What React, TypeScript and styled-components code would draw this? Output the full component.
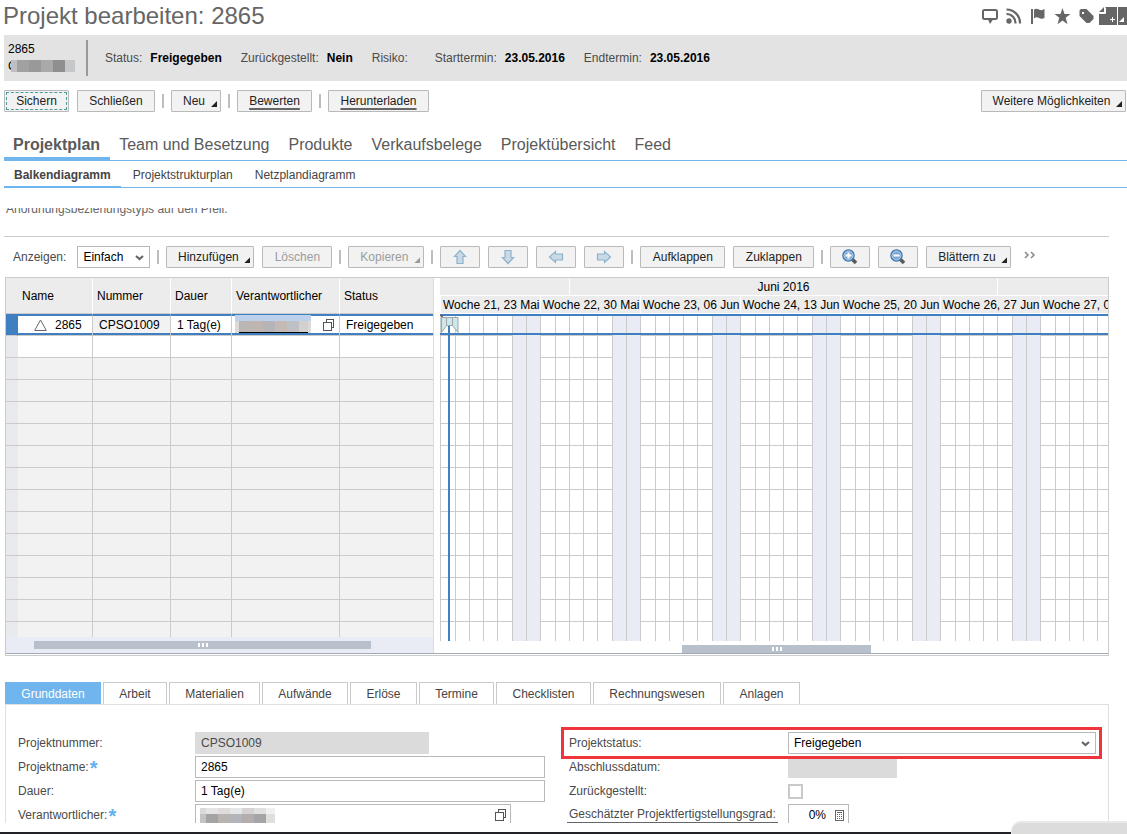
import React from "react";
import styled, { createGlobalStyle, css } from "styled-components";

const blue = "#407fc0";
const sky = "#70b5ee";
const line = "#cbcbcb";

const GlobalStyle = createGlobalStyle`
  * { box-sizing: border-box; }
  body {
    margin: 0;
    background: #fff;
    color: #4a4a4a;
    font-family: "Liberation Sans", Arial, sans-serif;
    font-size: 12px;
    line-height: 16px;
  }
  button, input, select { font: inherit; color: inherit; margin: 0; }
`;

const Page = styled.div`
  display: flex;
  flex-direction: column;
  height: 100vh;
  overflow: hidden;
  position: relative;
`;

const TitleBar = styled.header`
  display: flex;
  flex: none;
  align-items: center;
  justify-content: space-between;
  height: 35px;
  padding: 0 0 3px 3px;
`;

const Title = styled.h1`
  margin: 0;
  font-size: 24px;
  line-height: 28px;
  font-weight: normal;
  color: #666;
`;

const IconBar = styled.div`
  display: flex;
  align-items: center;
`;

const IconButton = styled.button<{ $width?: number }>`
  display: flex;
  justify-content: center;
  width: ${(p) => p.$width ?? 24}px;
  padding: 0;
  border: 0;
  background: none;
  color: #666;
`;

const SummaryBar = styled.section`
  display: flex;
  flex: none;
  align-items: center;
  height: 46px;
  margin-left: 4px;
  padding-left: 4px;
  background: #e3e3e3;
`;

const ProjectId = styled.div`
  width: 80px;
  height: 36px;
  margin-right: 17px;
  border-right: 2px solid #999;
  color: #000;
  line-height: 18px;
`;

const Masked = styled.div`
  display: flex;
  align-items: center;
  height: 16px;
`;

const Mosaic = styled.span<{ $height: number }>`
  display: flex;
  height: ${(p) => p.$height}px;
`;

const HeaderMosaic = styled(Mosaic)`
  margin-left: -6px;
`;

const Tile = styled.span<{ $color: string; $width?: number }>`
  width: ${(p) => p.$width ?? 12}px;
  background: ${(p) => p.$color};
`;

const Fact = styled.div`
  display: flex;
  gap: 8px;
  margin-right: 19px;
  white-space: nowrap;
  b { color: #000; }
`;

const Toolbar = styled.div`
  display: flex;
  flex: none;
  align-items: center;
  padding: 9px 0;
`;

const MainToolbar = styled(Toolbar)`
  padding: 9px 1px 9px 4px;
`;

const ChartToolbar = styled(Toolbar)`
  padding-left: 9px;
`;

const Divider = styled.span`
  flex: none;
  width: 2px;
  height: 14px;
  margin: 0 7px;
  background: #bdbdbd;
`;

const Spacer = styled.span`
  flex: 1;
`;

const Button = styled.button<{ $menu?: boolean; $width?: number; $underline?: boolean; $focused?: boolean }>`
  position: relative;
  display: flex;
  flex: none;
  align-items: center;
  justify-content: center;
  height: 22px;
  width: ${(p) => (p.$width ? `${p.$width}px` : "auto")};
  padding: 0 ${(p) => (p.$menu ? 15 : 11)}px 0 11px;
  border: 1px solid #b9b9b9;
  border-radius: 1px;
  background: #f2f2f2;
  color: #222;
  white-space: nowrap;
  & + & { margin-left: 8px; }
  &:disabled { color: #9c9c9c; }
  ${(p) => p.$menu && css`
    &::after {
      content: "";
      position: absolute;
      right: 3px;
      bottom: 4px;
      width: 6px;
      height: 6px;
      background: currentColor;
      clip-path: polygon(100% 0, 100% 100%, 0 100%);
    }
  `}
  ${(p) => p.$underline && css`
    text-decoration: underline 2px #666;
    text-decoration-skip-ink: none;
    text-underline-offset: 3px;
  `}
  ${(p) => p.$focused && css`
    outline: 1px dashed #4f9c9c;
    outline-offset: -3px;
  `}
`;

const MainTabs = styled.nav`
  display: flex;
  flex: none;
  align-items: flex-end;
  height: 40px;
  margin-left: 4px;
  border-bottom: 1px solid ${sky};
`;

const MainTab = styled.a<{ $active?: boolean }>`
  height: 30px;
  margin-bottom: -1px;
  padding: 4px 10px 0 9px;
  border-bottom: ${(p) => (p.$active ? `4px solid ${sky}` : "0")};
  font-size: 16px;
  line-height: 20px;
  font-weight: ${(p) => (p.$active ? "bold" : "normal")};
  color: #5a5a5a;
  text-decoration: none;
  white-space: nowrap;
`;

const SubTabs = styled(MainTabs)`
  gap: 2px;
  height: 27px;
`;

const SubTab = styled(MainTab)<{ $active?: boolean }>`
  height: 26px;
  padding: 5px 10px 0;
  border-bottom-width: ${(p) => (p.$active ? 2 : 0)}px;
  font-size: 12px;
  line-height: 16px;
  color: #444;
`;

const Content = styled.main`
  flex: 1;
  min-height: 0;
  overflow: hidden;
  margin: 20px 18px 0 4px;
`;

const Hint = styled.p`
  margin: -7px 0 19px;
  padding-left: 2px;
  color: #666;
`;

const ChartSection = styled.section`
  border-top: 1px solid ${line};
`;

const SelectBox = styled.span<{ $width?: number }>`
  position: relative;
  display: flex;
  width: ${(p) => (p.$width ? `${p.$width}px` : "100%")};
  select {
    appearance: none;
    width: 100%;
    height: 22px;
    padding: 0 20px 0 5px;
    border: 1px solid #b9b9b9;
    border-radius: 0;
    background: #fff;
    color: #000;
  }
  svg {
    position: absolute;
    right: 6px;
    top: 9px;
    pointer-events: none;
  }
`;

const ToolbarLabel = styled.label`
  margin-right: 11px;
`;

const More = styled.button`
  display: flex;
  margin-left: 13px;
  padding: 0 0 4px;
  border: 0;
  background: none;
`;

const ChartFrame = styled.div`
  margin-left: 1px;
  padding-bottom: 1px;
  border: 1px solid ${line};
`;

const ChartSplit = styled.div`
  display: flex;
  border-bottom: 1px solid #a3abb8;
`;

const TreePane = styled.div`
  flex: none;
  width: 428px;
  margin-right: 6px;
  border-right: 1px solid #dcdcdc;
`;

const TreeTable = styled.table`
  width: 427px;
  table-layout: fixed;
  border-spacing: 0;
  color: #000;
  th, td { padding: 0; text-align: left; font-weight: normal; }
  th {
    height: 36px;
    padding-left: 4px;
    background: #ececec;
    border-right: 1px solid #fff;
    border-bottom: 1px solid ${line};
  }
  th:first-child { padding-left: 16px; }
  th:last-child, td:last-child { border-right: 0; }
`;

const EmptyCell = styled.td<{ $shade?: "white" | "grey" | "handle"; $height?: number }>`
  height: ${(p) => p.$height ?? 22}px;
  background: ${(p) => (p.$shade === "white" ? "#fff" : p.$shade === "handle" ? "#e9eaed" : "#f2f2f2")};
  border-right: ${(p) => (p.$shade === "handle" ? 0 : 1)}px solid ${line};
  border-bottom: ${(p) => (p.$height ? 0 : 1)}px solid ${line};
`;

const SelectedCell = styled.td<{ $fill?: string }>`
  height: 22px;
  background: ${(p) => p.$fill ?? "#fff"};
  border-top: 2px solid ${blue};
  border-bottom: 1px solid ${line};
  border-right: 1px solid ${line};
  box-shadow: inset 0 -2px ${blue};
`;

const SelectedHandle = styled(SelectedCell)`
  border-right-color: ${blue};
`;

const CellText = styled.div<{ $pad: number }>`
  display: flex;
  align-items: center;
  gap: 8px;
  height: 17px;
  margin-bottom: 2px;
  padding-left: ${(p) => p.$pad}px;
`;

const PersonCell = styled.div`
  display: flex;
  align-items: center;
  justify-content: space-between;
  height: 17px;
  margin-bottom: 2px;
  padding: 0 4px 0 3px;
`;

const PersonName = styled.span`
  display: flex;
  justify-content: center;
  width: 76px;
  margin-top: -2px;
  padding-top: 6px;
  background: linear-gradient(#bed1ea 6px, #dcdad9 6px);
  > span { border-bottom: 1px solid #000; }
`;

const ScrollTrack = styled.div<{ $tree?: boolean }>`
  height: ${(p) => (p.$tree ? 16 : 12)}px;
  padding: 4px ${(p) => (p.$tree ? "62px 0 28px" : "0 0 242px")};
  background: ${(p) => (p.$tree ? "#e9ecf5" : "#fff")};
`;

const ScrollThumb = styled.div<{ $width?: number }>`
  display: flex;
  align-items: center;
  justify-content: center;
  gap: 2px;
  width: ${(p) => (p.$width ? `${p.$width}px` : "auto")};
  height: 8px;
  background: #b8c1cb;
  i { width: 2px; height: 4px; background: #fff; }
`;

const GanttPane = styled.div`
  flex: 1;
  min-width: 0;
  overflow: hidden;
  color: #000;
`;

const MonthRow = styled.div`
  display: flex;
  height: 18px;
  border-bottom: 1px solid #fff;
  background: #ececec;
`;

const Month = styled.div<{ $width?: number }>`
  flex: ${(p) => (p.$width ? "none" : "1")};
  width: ${(p) => (p.$width ? `${p.$width}px` : "auto")};
  border-right: ${(p) => (p.$width ? 1 : 0)}px solid #fff;
  line-height: 18px;
  text-align: center;
`;

const WeekRow = styled.div`
  display: flex;
  height: 18px;
  overflow: hidden;
  border-bottom: 1px solid #fff;
  background: #ececec;
`;

const Week = styled.div`
  flex: none;
  width: 100px;
  padding-left: 2px;
  border-left: 1px solid #fff;
  line-height: 18px;
  white-space: nowrap;
`;

const Chart = styled.svg`
  display: block;
`;

const DetailTabs = styled.nav`
  display: flex;
  gap: 2px;
  margin: 26px 0 0 1px;
`;

const DetailTab = styled.a<{ $active?: boolean; $width: number }>`
  width: ${(p) => p.$width}px;
  height: 22px;
  border: 1px solid ${(p) => (p.$active ? sky : line)};
  border-bottom: 0;
  background: ${(p) => (p.$active ? sky : "#fff")};
  color: ${(p) => (p.$active ? "#fff" : "#444")};
  line-height: 22px;
  text-align: center;
  text-decoration: none;
`;

const FormPanel = styled.form`
  display: grid;
  grid-template-columns: 1fr 1fr;
  gap: 24px;
  margin-left: 1px;
  padding: 27px 12px;
  border: 1px solid #e0e0e0;
`;

const FormColumn = styled.div`
  display: flex;
  flex-direction: column;
  gap: 2px;
`;

const Field = styled.div<{ $label: number }>`
  display: grid;
  grid-template-columns: ${(p) => p.$label}px minmax(0, 1fr);
  align-items: center;
  height: 22px;
`;

const HighlightedField = styled(Field)`
  position: relative;
  &::after {
    content: "";
    position: absolute;
    inset: -5px -6px -5px -8px;
    border: 3px solid #ee343d;
    pointer-events: none;
  }
`;

const FieldLabel = styled.label`
  display: flex;
  gap: 1px;
`;

const Required = styled.span`
  color: #5fb0ee;
  font-size: 20px;
  font-weight: bold;
  line-height: 18px;
  height: 16px;
`;

const LinkLabel = styled.label`
  align-self: start;
  justify-self: start;
  height: 19px;
  margin-left: -2px;
  padding: 3px 2px 0;
  border-bottom: 1px solid #666;
  line-height: 15px;
  white-space: nowrap;
`;

const TextInput = styled.input<{ $width: number }>`
  width: ${(p) => p.$width}px;
  height: 22px;
  padding: 0 5px;
  border: 1px solid #b9b9b9;
  border-radius: 0;
  background: #fff;
  color: #000;
  &:disabled { border-color: #dbdbdb; background: #dbdbdb; color: #4a4a4a; }
`;

const PickerBox = styled.div<{ $width: number }>`
  display: flex;
  align-items: center;
  justify-content: space-between;
  width: ${(p) => p.$width}px;
  height: 22px;
  padding: 0 3px 0 4px;
  border: 1px solid #b9b9b9;
  input {
    width: 33px;
    padding: 0;
    border: 0;
    color: #000;
    text-align: right;
  }
`;

const MosaicGrid = styled.span`
  display: flex;
  flex-direction: column;
  padding-top: 4px;
`;

const Checkbox = styled.input`
  appearance: none;
  width: 15px;
  height: 15px;
  border: 2px solid #c9c9c9;
  background: #fff;
`;

const FootLine = styled.div`
  flex: none;
  height: 2px;
  margin-top: 9px;
  background: #222226;
`;

const CornerFlap = styled.div`
  position: absolute;
  right: 0;
  bottom: 0;
  width: 116px;
  height: 13px;
  border-radius: 10px 0 0 0;
  border-top: 2px solid #e9e9e9;
  border-left: 1px solid #e9e9e9;
  background: #dcdcdc;
`;

const Chevron = () => (
  <svg width="9" height="6" viewBox="0 0 9 6">
    <path d="M1 1l3.500 3L8 1" fill="none" stroke="#666" strokeWidth="2.200" />
  </svg>
);

const Copies = () => (
  <svg width="12" height="12" viewBox="0 0 12 12" fill="#fff" stroke="#555" shapeRendering="crispEdges">
    <rect x="3.500" y="0.500" width="7" height="8" />
    <rect x="0.500" y="3.500" width="8" height="8" />
  </svg>
);

const Calculator = () => (
  <svg width="10" height="11" viewBox="0 0 10 11" shapeRendering="crispEdges">
    <rect x="0.500" y="0.500" width="8" height="10" fill="#fff" stroke="#666" />
    <rect x="2" y="2" width="5" height="1" fill="#666" />
    {[4, 6, 8].map((y) => [2, 4, 6].map((x) => <rect key={`${x}-${y}`} x={x} y={y} width="1" height="1" fill="#666" />))}
  </svg>
);

const Arrow = ({ angle }: { angle: number }) => (
  <svg width="16" height="16" viewBox="0 0 16 16">
    <path
      d="M8 1.500L13.500 7.500H11V14.500H5V7.500H2.500Z"
      transform={`rotate(${angle} 8 8)`}
      fill="#c9dae6"
      stroke="#8db2cc"
      strokeWidth="1.200"
    />
  </svg>
);

const Magnifier = ({ plus }: { plus?: boolean }) => (
  <svg width="16" height="16" viewBox="0 0 16 16">
    <path d="M10 10L14 14" stroke="#5a5a5a" strokeWidth="3.500" />
    <circle cx="6.500" cy="6.500" r="5.500" fill="#7fa9d3" stroke="#3f78ad" strokeWidth="1.500" />
    <circle cx="6.500" cy="6.500" r="4.500" fill="none" stroke="#c3d8ec" strokeWidth="0.800" />
    <path d={plus ? "M3.500 6.500H9.500M6.500 3.500V9.500" : "M3.500 6.500H9.500"} stroke="#fff" strokeWidth="2" />
  </svg>
);

const arrows = [
  { name: "Nach oben", angle: 0 },
  { name: "Nach unten", angle: 180 },
  { name: "Nach links", angle: -90 },
  { name: "Nach rechts", angle: 90 },
];

const weeks = ["21, 23 Mai", "22, 30 Mai", "23, 06 Jun", "24, 13 Jun", "25, 20 Jun", "26, 27 Jun", "27, 04 Jul"];
const dayLines = [0, 15, 29, 43, 57, 72, 86];

const detailTabs = [
  { name: "Grunddaten", width: 96 },
  { name: "Arbeit", width: 64 },
  { name: "Materialien", width: 91 },
  { name: "Aufwände", width: 86 },
  { name: "Erlöse", width: 67 },
  { name: "Termine", width: 75 },
  { name: "Checklisten", width: 95 },
  { name: "Rechnungswesen", width: 128 },
  { name: "Anlagen", width: 77 },
];

const facts = [
  ["Status:", "Freigegeben"],
  ["Zurückgestellt:", "Nein"],
  ["Risiko:", ""],
  ["Starttermin:", "23.05.2016"],
  ["Endtermin:", "23.05.2016"],
];

const Tiles = ({ colors, first, last }: { colors: string[]; first?: number; last?: number }) => (
  <>
    {colors.map((c, i) => (
      <Tile key={i} $color={c} $width={i === 0 ? first : i === colors.length - 1 ? last : undefined} />
    ))}
  </>
);

const Grip = () => (
  <>
    <i />
    <i />
    <i />
  </>
);

const HeaderIcons = () => (
  <IconBar>
    <IconButton aria-label="Kommentar">
      <svg width="16" height="19" viewBox="0 0 16 19">
        <rect x="1" y="3" width="14" height="9" rx="1.500" fill="none" stroke="currentColor" strokeWidth="2" />
        <path d="M6 12.500h5L8 17z" fill="currentColor" />
      </svg>
    </IconButton>
    <IconButton aria-label="Feed">
      <svg width="16" height="19" viewBox="0 0 16 19" fill="none" stroke="currentColor" strokeWidth="2.200">
        <circle cx="3" cy="14" r="2.700" fill="currentColor" stroke="none" />
        <path d="M0.500 7A9 9 0 0 1 9.500 16.500M0.500 2.500A13.500 13.500 0 0 1 14 16.500" />
      </svg>
    </IconButton>
    <IconButton aria-label="Markieren">
      <svg width="14" height="19" viewBox="0 0 14 19" fill="currentColor">
        <rect x="0" y="2" width="2" height="15" />
        <path d="M3 2.500Q5.500 1 8 2.500T13.500 2V11Q10.500 12.500 8 11T3 11.500Z" />
      </svg>
    </IconButton>
    <IconButton aria-label="Favorit">
      <svg width="17" height="19" viewBox="0 0 17 19" fill="currentColor">
        <path d="M8.500 1L10.500 7H16.500L11.700 10.800L13.500 17.200L8.500 13.400L3.500 17.200L5.300 10.800L0.500 7H6.500Z" />
      </svg>
    </IconButton>
    <IconButton aria-label="Tag">
      <svg width="15" height="19" viewBox="0 0 15 19">
        <path d="M0.500 4Q0.500 2 2.500 2H7.500L14.500 9V12L10.500 16H7.500L0.500 9Z" fill="currentColor" />
        <rect x="3" y="5" width="2" height="2" fill="#fff" />
      </svg>
    </IconButton>
    <IconButton $width={29} aria-label="Neue Notiz">
      <svg width="28" height="19" viewBox="0 0 28 19" fill="currentColor">
        <path d="M6 0H18V18H0V6.500H6Z" />
        <path d="M0 5L5 0V5Z" />
        <path d="M6.500 0.500V6.500H0.500M11 12.500H16M13.500 10V15" fill="none" stroke="#fff" />
        <rect x="19" y="0" width="9" height="18" />
        <path d="M25 10V15H20Z" fill="#fff" />
      </svg>
    </IconButton>
  </IconBar>
);

const Gantt = () => (
  <GanttPane>
    <MonthRow>
      <Month $width={130} />
      <Month $width={428}>Juni 2016</Month>
      <Month />
    </MonthRow>
    <WeekRow>
      {weeks.map((w) => (
        <Week key={w}>Woche {w}</Week>
      ))}
    </WeekRow>
    <Chart width="100%" height="327" shapeRendering="crispEdges">
      <defs>
        <pattern id="week" width="100" height="22" patternUnits="userSpaceOnUse">
          <rect x="0" y="21" width="72" height="1" fill={line} />
          <rect x="73" y="0" width="27" height="22" fill="#e9ecf5" />
          {dayLines.map((x) => (
            <rect key={x} x={x} y="0" width="1" height="22" fill={line} />
          ))}
        </pattern>
      </defs>
      <rect width="100%" height="327" fill="url(#week)" />
      <rect width="100%" height="2" fill={blue} />
      <rect y="19" width="100%" height="2" fill={blue} />
      <rect x="8" y="10" width="2" height="317" fill={blue} />
      <g fill="#cde8ea" stroke="#9ea6a7" shapeRendering="auto">
        <path d="M1.500 3.500H18V18.500L12.500 11.500H6.500L1.500 18.500Z" />
        <path d="M6.500 3.500V11.500M12.500 3.500V11.500" />
      </g>
      <path d="M0 1H4L2 4Z" fill="#666" />
    </Chart>
    <ScrollTrack>
      <ScrollThumb $width={189}>
        <Grip />
      </ScrollThumb>
    </ScrollTrack>
  </GanttPane>
);

const EmptyRow = ({ shade, height }: { shade: "white" | "grey"; height?: number }) => (
  <tr>
    <EmptyCell $shade="handle" $height={height} />
    {[0, 1, 2, 3, 4].map((i) => (
      <EmptyCell key={i} $shade={shade} $height={height} />
    ))}
  </tr>
);

const Tree = () => (
  <TreePane>
    <TreeTable>
      <colgroup>
        {[12, 75, 78, 61, 108, 93].map((w, i) => (
          <col key={i} width={w} />
        ))}
      </colgroup>
      <thead>
        <tr>
          <th colSpan={2}>Name</th>
          <th>Nummer</th>
          <th>Dauer</th>
          <th>Verantwortlicher</th>
          <th>Status</th>
        </tr>
      </thead>
      <tbody>
        <tr>
          <SelectedHandle $fill={blue} />
          <SelectedCell>
            <CellText $pad={16}>
              <svg width="13" height="12" viewBox="0 0 13 12">
                <path d="M6.500 1L12.300 11.500H0.700Z" fill="#fff" stroke="#666" />
              </svg>
              2865
            </CellText>
          </SelectedCell>
          <SelectedCell $fill="#f2f2f2">
            <CellText $pad={6}>CPSO1009</CellText>
          </SelectedCell>
          <SelectedCell>
            <CellText $pad={6}>1 Tag(e)</CellText>
          </SelectedCell>
          <SelectedCell>
            <PersonCell>
              <PersonName>
                <Mosaic $height={12}>
                  <Tiles
                    last={9}
                    colors={["#b9b6b4", "#bfb6b1", "#b4b4b9", "#c3b9b5", "#bfc0c6", "#d4d0cf"]}
                  />
                </Mosaic>
              </PersonName>
              <Copies />
            </PersonCell>
          </SelectedCell>
          <SelectedCell>
            <CellText $pad={6}>Freigegeben</CellText>
          </SelectedCell>
        </tr>
        <EmptyRow shade="white" />
        {Array.from({ length: 12 }, (_, i) => (
          <EmptyRow key={i} shade="grey" />
        ))}
        <EmptyRow shade="grey" height={15} />
      </tbody>
    </TreeTable>
    <ScrollTrack $tree>
      <ScrollThumb>
        <Grip />
      </ScrollThumb>
    </ScrollTrack>
  </TreePane>
);

export default function App() {
  return (
    <Page>
      <GlobalStyle />
      <TitleBar>
        <Title>Projekt bearbeiten: 2865</Title>
        <HeaderIcons />
      </TitleBar>
      <SummaryBar>
        <ProjectId>
          2865
          <Masked>
            C
            <HeaderMosaic $height={12}>
              <Tiles first={6} last={10} colors={["#bfbfc3", "#a1a1a1", "#999", "#a9a9aa", "#8f8f90", "#c5c7c9"]} />
            </HeaderMosaic>
          </Masked>
        </ProjectId>
        {facts.map(([label, value]) => (
          <Fact key={label}>
            <span>{label}</span>
            <b>{value}</b>
          </Fact>
        ))}
      </SummaryBar>
      <MainToolbar>
        <Button $focused $width={65}>Sichern</Button>
        <Button $width={78}>Schließen</Button>
        <Divider />
        <Button $menu $width={50}>Neu</Button>
        <Divider />
        <Button $underline $width={75}>Bewerten</Button>
        <Divider />
        <Button $underline $width={101}>Herunterladen</Button>
        <Spacer />
        <Button $menu $width={145}>Weitere Möglichkeiten</Button>
      </MainToolbar>
      <MainTabs>
        <MainTab href="#plan" $active>Projektplan</MainTab>
        <MainTab href="#team">Team und Besetzung</MainTab>
        <MainTab href="#produkte">Produkte</MainTab>
        <MainTab href="#belege">Verkaufsbelege</MainTab>
        <MainTab href="#uebersicht">Projektübersicht</MainTab>
        <MainTab href="#feed">Feed</MainTab>
      </MainTabs>
      <SubTabs>
        <SubTab href="#balken" $active>Balkendiagramm</SubTab>
        <SubTab href="#struktur">Projektstrukturplan</SubTab>
        <SubTab href="#netz">Netzplandiagramm</SubTab>
      </SubTabs>
      <Content>
        <Hint>Anordnungsbeziehungstyps auf den Pfeil.</Hint>
        <ChartSection>
          <ChartToolbar>
            <ToolbarLabel htmlFor="view">Anzeigen:</ToolbarLabel>
            <SelectBox $width={73}>
              <select id="view" defaultValue="Einfach">
                <option>Einfach</option>
              </select>
              <Chevron />
            </SelectBox>
            <Divider />
            <Button $menu $width={88}>Hinzufügen</Button>
            <Button disabled $width={70}>Löschen</Button>
            <Divider />
            <Button $menu disabled $width={76}>Kopieren</Button>
            <Divider />
            {arrows.map((a) => (
              <Button key={a.name} $width={40} aria-label={a.name}>
                <Arrow angle={a.angle} />
              </Button>
            ))}
            <Divider />
            <Button $width={85}>Aufklappen</Button>
            <Button $width={81}>Zuklappen</Button>
            <Divider />
            <Button $width={40} aria-label="Vergrößern">
              <Magnifier plus />
            </Button>
            <Button $width={40} aria-label="Verkleinern">
              <Magnifier />
            </Button>
            <Button $menu $width={85}>Blättern zu</Button>
            <More aria-label="Mehr">
              <svg width="12" height="8" viewBox="0 0 12 8" fill="none" stroke="#888" strokeWidth="1.500">
                <path d="M1 1L4 4L1 7M7 1L10 4L7 7" />
              </svg>
            </More>
          </ChartToolbar>
          <ChartFrame>
            <ChartSplit>
              <Tree />
              <Gantt />
            </ChartSplit>
          </ChartFrame>
        </ChartSection>
        <DetailTabs>
          {detailTabs.map((t, i) => (
            <DetailTab key={t.name} href={`#${t.name}`} $active={i === 0} $width={t.width}>
              {t.name}
            </DetailTab>
          ))}
        </DetailTabs>
        <FormPanel>
          <FormColumn>
            <Field $label={177}>
              <FieldLabel htmlFor="nummer">Projektnummer:</FieldLabel>
              <TextInput id="nummer" $width={234} disabled defaultValue="CPSO1009" />
            </Field>
            <Field $label={177}>
              <FieldLabel htmlFor="name">
                Projektname:<Required>*</Required>
              </FieldLabel>
              <TextInput id="name" $width={350} defaultValue="2865" />
            </Field>
            <Field $label={177}>
              <FieldLabel htmlFor="dauer">Dauer:</FieldLabel>
              <TextInput id="dauer" $width={350} defaultValue="1 Tag(e)" />
            </Field>
            <Field $label={177}>
              <FieldLabel>
                Verantwortlicher:<Required>*</Required>
              </FieldLabel>
              <PickerBox $width={316}>
                <MosaicGrid>
                  <Mosaic $height={6}>
                    <Tiles
                      first={6}
                      last={9}
                      colors={["#dcd9d9", "#e4e4e4", "#dedcda", "#e6e6e6", "#d6d2d3", "#e0e0e0", "#f0f0f0"]}
                    />
                  </Mosaic>
                  <Mosaic $height={12}>
                    <Tiles
                      first={6}
                      last={9}
                      colors={["#c4c3c1", "#a3a3a4", "#b9b3b1", "#b3b5ba", "#b3aead", "#a5a5a8", "#dfdfde"]}
                    />
                  </Mosaic>
                </MosaicGrid>
                <Copies />
              </PickerBox>
            </Field>
          </FormColumn>
          <FormColumn>
            <HighlightedField $label={219}>
              <FieldLabel htmlFor="status">Projektstatus:</FieldLabel>
              <SelectBox>
                <select id="status" defaultValue="Freigegeben">
                  <option>Freigegeben</option>
                </select>
                <Chevron />
              </SelectBox>
            </HighlightedField>
            <Field $label={219}>
              <FieldLabel htmlFor="abschluss">Abschlussdatum:</FieldLabel>
              <TextInput id="abschluss" $width={109} disabled />
            </Field>
            <Field $label={219}>
              <FieldLabel htmlFor="zurueck">Zurückgestellt:</FieldLabel>
              <Checkbox id="zurueck" type="checkbox" />
            </Field>
            <Field $label={219}>
              <LinkLabel htmlFor="grad">Geschätzter Projektfertigstellungsgrad:</LinkLabel>
              <PickerBox $width={61}>
                <input id="grad" defaultValue="0%" />
                <Calculator />
              </PickerBox>
            </Field>
          </FormColumn>
        </FormPanel>
      </Content>
      <FootLine />
      <CornerFlap />
    </Page>
  );
}
